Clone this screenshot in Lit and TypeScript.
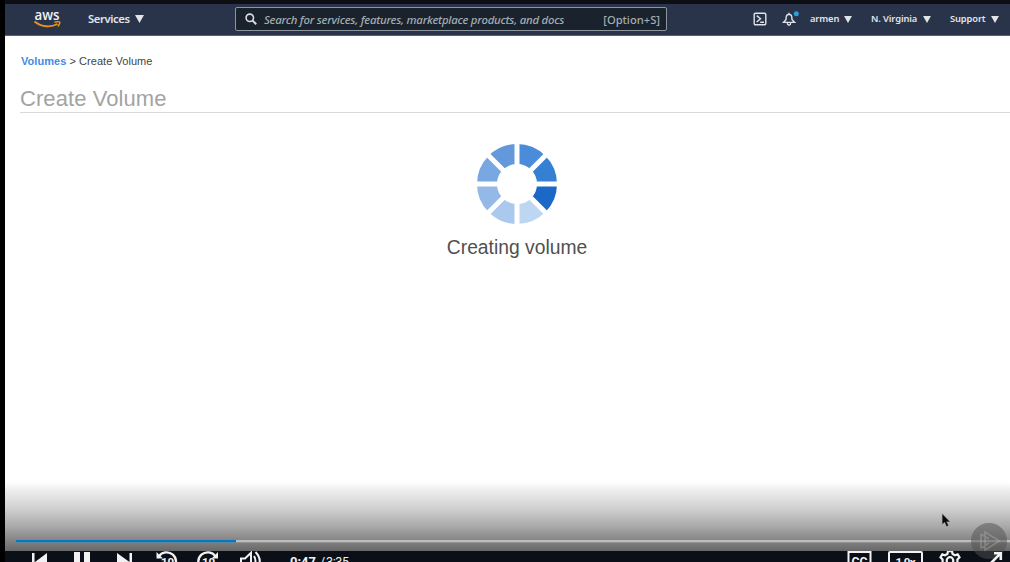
import { LitElement, html, css, svg } from "lit";
import { customElement } from "lit/decorators.js";

const SEGMENTS = ["#4a8bda", "#3580d3", "#1b69c6", "#bdd6f1", "#abc9ed", "#94b9e7", "#79a7e1", "#6399db"];

@customElement("app-spinner")
class AppSpinner extends LitElement {
  static styles = css`:host { display: block; width: 80px; height: 80px; } svg { display: block; }`;
  render() {
    const pt = (r: number, deg: number) => {
      const a = (deg * Math.PI) / 180;
      return `${(r * Math.sin(a)).toFixed(2)} ${(-r * Math.cos(a)).toFixed(2)}`;
    };
    return html`<svg width="80" height="80" viewBox="-40 -40 80 80">
      ${SEGMENTS.map((c, i) => svg`<path fill=${c} d=${`M${pt(20, i * 45)}L${pt(40, i * 45)}A40 40 0 0 1 ${pt(40, i * 45 + 45)}L${pt(20, i * 45 + 45)}A20 20 0 0 0 ${pt(20, i * 45)}Z`}/>`)}
      <g stroke="#fff" stroke-width="5"><path d="M0-41V41M-41 0H41M-29-29L29 29M-29 29L29-29"/></g>
    </svg>`;
  }
}

@customElement("app-root")
class AppRoot extends LitElement {
  static styles = css`
    :host { display: block; width: 1010px; height: 562px; overflow: hidden; background: #000; }
    * { box-sizing: border-box; }
    svg { display: block; flex: none; }
    .frame { position: relative; margin-left: 5px; height: 562px; display: flex; flex-direction: column; overflow: hidden; background: #fff; }
    .strip { height: 4px; flex: none; background: #0d0f14; }
    .nav { height: 32px; flex: none; display: flex; align-items: center; padding-bottom: 1px; background: #29344b; border-bottom: 1px solid #5d6470; font: 600 11.5px "Noto Sans", sans-serif; color: #e2e5e8; white-space: nowrap; }
    .logo { margin-left: 29px; width: 28px; overflow: visible; }
    .word { font: 600 14px "Open Sans", sans-serif; }
    .services { margin-left: 26px; width: 42px; font-size: 11.3px; letter-spacing: -0.4px; line-height: 14px; padding-bottom: 1px; }
    .tri { margin-left: 5px; }
    .search { margin-left: 91px; width: 432px; height: 24px; border: 1px solid #8b979c; border-radius: 2px; background: #1a222d; display: flex; align-items: center; padding: 0 6px 0 9px; color: #a3adb0; }
    .hint { margin-left: 7px; flex: 1; font: italic 500 11.4px/16px "Noto Sans", sans-serif; letter-spacing: -0.24px; padding-top: 1px; }
    .key { font: 500 11.2px/16px "Noto Sans", sans-serif; padding-top: 1px; }
    .cloud { margin-left: 86px; }
    .bell { margin-left: 15px; }
    .item { font-size: 9.3px; line-height: 12px; letter-spacing: -0.1px; display: flex; align-items: center; }
    .user { margin-left: 11px; width: 61px; } .region { width: 79px; }
    .item .label { flex: none; padding-bottom: 1px; }
    .user .label { width: 28px; } .region .label { width: 46px; } .support .label { width: 35px; }
    .item .tri { margin-left: 6px; }
    .crumbs { margin: 18px 0 0 16px; font: 11px/14px "Liberation Sans", Arial, sans-serif; letter-spacing: 0.05px; color: #444; }
    .crumbs b { color: #3f8ce6; }
    h1 { margin: 16px 0 0 15px; height: 29px; border-bottom: 1px solid #d9d9d9; font: 22px/29px "Liberation Sans", Arial, sans-serif; letter-spacing: 0.08px; color: #a3a3a3; }
    .loading { margin-left: 19px; margin-top: 31px; display: flex; flex-direction: column; align-items: center; }
    .message { margin-top: 12px; font: 19.3px/24px "Liberation Sans", Arial, sans-serif; color: #505050; }
    .player { position: absolute; left: 0; right: 0; bottom: 0; height: 82px; display: flex; flex-direction: column; }
    .shade { height: 71px; flex: none; background: linear-gradient(#fff 0, #fdfdfd 3px, #f0f0f0 9px, #cfcfcf 29px, #a8a8a8 47px, #858585 60px, #686868 71px); padding: 60px 0 0 11px; }
    .track { height: 2px; background: #bebebe; box-shadow: 0 1px 0 rgba(190, 190, 190, 0.3); }
    .played { height: 2px; background: #0878bc; box-shadow: 0 1px 0 rgba(8, 120, 188, 0.4); }
    .controls { height: 11px; overflow: hidden; background: #0b1018; }
    .pointer { position: absolute; left: 936px; top: 512px; }
    .mark { position: absolute; left: 965px; top: 522px; }
    .expand { position: absolute; right: 7px; bottom: 0; }
    .controls text { font-family: "Roboto", sans-serif; fill: #f2f2f2; }
  `;

  private tri(w: number) {
    return html`<svg class="tri" width=${w} height=${w - 1} viewBox="0 0 9 8"><path d="M0 0H9L4.5 8Z" fill="#e2e5e8"/></svg>`;
  }

  render() {
    return html`<div class="frame">
      <div class="strip"></div>
      <header class="nav">
        <svg class="logo" width="28" height="22" viewBox="0 0 28 22">
          <text class="word" x="0.5" y="11.5" fill="#f1f2f4" textLength="25" lengthAdjust="spacingAndGlyphs">aws</text>
          <path d="M0.500 13.500C8 19.500 17 19.500 23.500 16" fill="none" stroke="#e8951f" stroke-width="1.9"/>
          <path d="M20.500 14.200Q25.500 13.200 25.800 14.300T23.900 18.500" fill="none" stroke="#e8951f" stroke-width="1.5"/>
        </svg>
        <span class="services">Services</span>${this.tri(9)}
        <div class="search">
          <svg width="12" height="12" viewBox="0 0 12 12" fill="none" stroke="#d8dcde"><circle cx="4.8" cy="4.8" r="3.7" stroke-width="1.6"/><path d="M7.6 7.6L11.2 11.2" stroke-width="2"/></svg>
          <span class="hint">Search for services, features, marketplace products, and docs</span>
          <span class="key">[Option+S]</span>
        </div>
        <svg class="cloud" width="14" height="14" viewBox="0 0 14 14" fill="none" stroke="#dfe3e6" stroke-width="1.4"><rect x="1.2" y="1.2" width="11.6" height="11.6" rx="1.2"/><path d="M3.7 3.6L7.5 6.8L3.7 10M7.2 10.3H11"/></svg>
        <svg class="bell" width="17" height="18" viewBox="0 0 17 18"><path d="M1.4 12.4L4.1 9.5V8Q4.1 4.5 7 4.2Q9.9 4.5 9.9 8V9.5L12.6 12.4ZM5.3 13.1Q5.5 15.2 7 15.2T8.7 13.1M7 2.7V4" fill="none" stroke="#dfe3e6" stroke-width="1.4"/><circle cx="14.3" cy="3.7" r="2.5" fill="#2b9fd6"/></svg>
        <span class="item user"><span class="label">armen</span>${this.tri(8)}</span>
        <span class="item region"><span class="label">N. Virginia</span>${this.tri(8)}</span>
        <span class="item support"><span class="label">Support</span>${this.tri(8)}</span>
      </header>
      <div class="crumbs"><b>Volumes</b> &gt; Create Volume</div>
      <h1>Create Volume</h1>
      <main class="loading"><app-spinner></app-spinner><div class="message">Creating volume</div></main>
      <div class="player">
        <div class="shade"><div class="track"><div class="played" style="width:220px"></div></div></div>
        <div class="controls">
          <svg width="1005" height="28" viewBox="5 551 1005 28" fill="#f2f2f2">
            <path d="M32 553H34.5V571H32ZM47 553V571L35 562ZM74 552H80V572H74ZM84 552H90V572H84ZM117 553L129.500 562L117 571ZM129.500 553H132V571H129.500Z"/>
            <g fill="none" stroke="#f2f2f2" stroke-width="2.3">
              <path d="M158.800 556.300A9.500 9.500 0 1 1 158.800 567.300M215.500 556.300A9.500 9.500 0 1 0 215.500 567.300"/>
              <path d="M241 558.500H245L251 552.800V571L245 565.500H241ZM254 556Q257 561 254 567M255.500 552Q264 561 255.500 571" stroke-width="2"/>
              <rect x="848.500" y="552" width="22" height="18" stroke-width="2"/>
              <rect x="889" y="552" width="33" height="18" rx="1" stroke-width="2"/>
              <circle cx="950" cy="560.500" r="3.300" stroke-width="2.2"/>
              <path d="M948 551.200H952L952.600 554L955 555.200L957.700 554.300L959.500 557.400L957.400 559.400V562L959.500 564L957.700 567L955 566.200L952.600 567.500L952 570H948L947.400 567.500L945 566.200L942.300 567L940.500 564L942.600 562V559.400L940.500 557.400L942.300 554.300L945 555.200L947.400 554Z" stroke-width="2.2"/>
            </g>
            <path d="M156.500 552V558.500H163ZM218 552V558.500H211.500Z"/>
            <text x="161" y="566" font-size="11.500" font-weight="700">10</text>
            <text x="202" y="566" font-size="11.500" font-weight="700">10</text>
            <text x="290" y="566" font-size="12.500" font-weight="700" textLength="26" lengthAdjust="spacingAndGlyphs">0:47</text>
            <text x="320" y="566" font-size="12.500">/</text>
            <text x="326" y="566" font-size="12.500" textLength="23">3:35</text>
            <text x="851.500" y="566" font-size="12" font-weight="700" textLength="16" lengthAdjust="spacingAndGlyphs">CC</text>
            <text x="895.500" y="566" font-size="11.500" font-weight="700" textLength="20">1.0x</text>
          </svg>
        </div>
      </div>
      <svg class="pointer" width="10" height="16" viewBox="0 0 10 16"><path d="M1.200 1.800V12.300L3.700 10.300L5.600 14.400L7.500 13.500L5.700 9.800H9Z" fill="#0a0a0a" stroke="#999" stroke-width=".4"/></svg>
      <svg class="mark" width="38" height="38" viewBox="0 0 38 38"><circle cx="19" cy="19" r="18" fill="#505050" opacity=".5"/><path d="M11 12V26.500M15 10V28L29.500 19ZM11 12L19 17M11 26.500L19 21" fill="none" stroke="#bbb" stroke-opacity=".35" stroke-width="1.800"/></svg>
      <svg class="expand" width="13" height="11" viewBox="990 551 13 11"><path d="M994 553.200H1000.800V560M1000.800 553.200L991 563" fill="none" stroke="#f2f2f2" stroke-width="2.600"/></svg>
    </div>`;
  }
}
